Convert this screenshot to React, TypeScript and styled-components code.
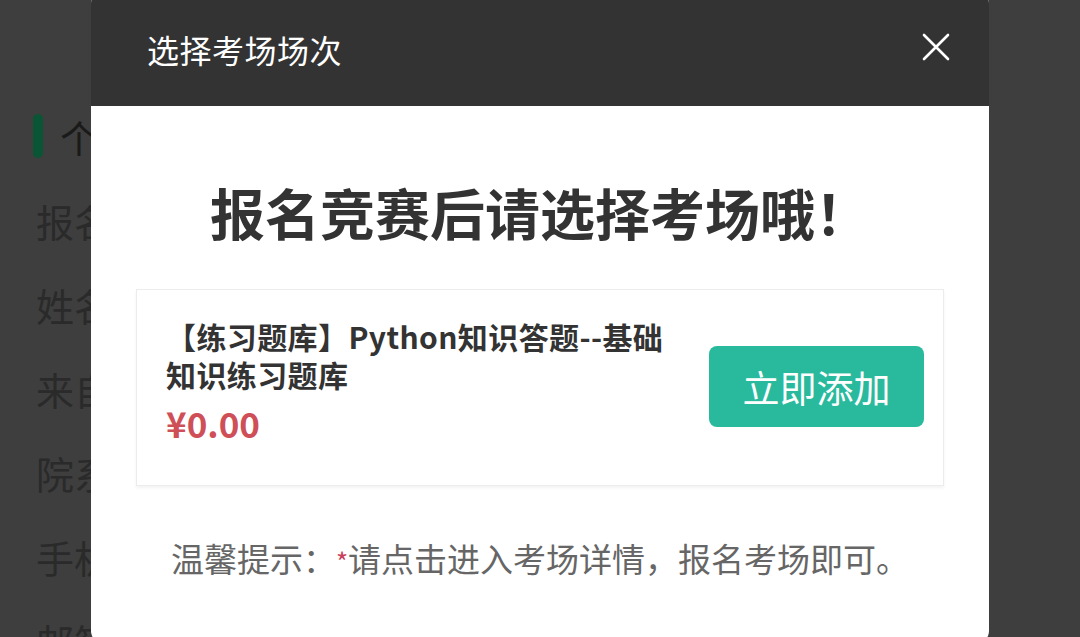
import React from "react";
import styled, { createGlobalStyle } from "styled-components";

const GlobalStyle = createGlobalStyle`
  html, body {
    margin: 0;
    padding: 0;
    height: 100%;
    overflow: hidden;
  }
  body {
    font-family: "Noto Sans CJK SC", "Noto Sans", sans-serif;
  }
  * {
    box-sizing: border-box;
  }
`;

const Page = styled.div`
  height: 637px;
  overflow: hidden;
  background: #7c7c7c;
  padding: 94px 0 0 33px;
`;

const SectionTitle = styled.div`
  display: flex;
  align-items: center;
  gap: 17px;
  height: 84px;
  font-size: 38px;
  color: #343434;
`;

const GreenBar = styled.span`
  width: 10px;
  height: 44px;
  border-radius: 5px;
  background: #14aa6c;
`;

const FieldRow = styled.div`
  display: flex;
  align-items: center;
  height: 84px;
  padding-left: 3px;
  font-size: 38px;
  color: #545454;
`;

const Overlay = styled.div`
  position: fixed;
  inset: 0;
  background: rgba(0, 0, 0, 0.5);
  display: flex;
  justify-content: center;
  align-items: flex-start;
`;

const Modal = styled.div`
  width: 898px;
  margin-top: -8px;
  border-radius: 12px;
  overflow: hidden;
  background: #fff;
`;

const Header = styled.div`
  height: 114px;
  padding: 0 39px 0 56px;
  background: #333333;
  display: flex;
  align-items: center;
  justify-content: space-between;
`;

const Title = styled.div`
  font-size: 32px;
  color: #fff;
  letter-spacing: 0.5px;
`;

const CloseButton = styled.button`
  width: 28px;
  height: 28px;
  padding: 0;
  border: none;
  background: transparent;
  display: flex;
  margin-top: -4px;
  cursor: pointer;
`;

const Body = styled.div`
  padding: 74px 45px 60px;
`;

const Heading = styled.h1`
  margin: 0;
  font-size: 55px;
  line-height: 62px;
  font-weight: 700;
  color: #333;
  text-align: center;
`;

const Card = styled.div`
  margin-top: 47px;
  min-height: 197px;
  display: flex;
  align-items: center;
  gap: 20px;
  padding: 0 19px 0 29px;
  border: 1px solid #ececec;
  box-shadow: 0 2px 3px rgba(0, 0, 0, 0.05);
  background: #fff;
`;

const CardInfo = styled.div`
  flex: 1;
  padding: 27px 0 40px;
`;

const CardTitle = styled.div`
  max-width: 510px;
  font-size: 30px;
  line-height: 38px;
  font-weight: 700;
  letter-spacing: 0.4px;
  color: #333;
`;

const Price = styled.div`
  margin-top: 8px;
  font-size: 35px;
  line-height: 44px;
  font-weight: 700;
  color: #cf4f58;
`;

const AddButton = styled.button`
  width: 215px;
  height: 81px;
  flex-shrink: 0;
  margin-top: -2px;
  border: none;
  border-radius: 8px;
  background: #29ba9d;
  color: #fff;
  font-family: inherit;
  font-size: 37px;
  cursor: pointer;
`;

const Tip = styled.p`
  margin: 50px 0 0;
  font-size: 33px;
  line-height: 44px;
  color: #666;
  text-align: center;
`;

const Star = styled.span`
  color: #c8405a;
  font-size: 26px;
`;

const fields = ["报名竞赛", "姓名", "来自学校", "院系", "手机号", "邮箱"];

function CloseIcon() {
  return (
    <svg width="28" height="28" viewBox="0 0 28 28" fill="none">
      <path
        d="M2 2 26 26M26 2 2 26"
        stroke="#fff"
        strokeWidth="2.6"
        strokeLinecap="round"
      />
    </svg>
  );
}

export default function App() {
  return (
    <>
      <GlobalStyle />
      <Page>
        <SectionTitle>
          <GreenBar />
          个人信息
        </SectionTitle>
        {fields.map((label) => (
          <FieldRow key={label}>{label}</FieldRow>
        ))}
      </Page>
      <Overlay>
        <Modal>
          <Header>
            <Title>选择考场场次</Title>
            <CloseButton aria-label="关闭">
              <CloseIcon />
            </CloseButton>
          </Header>
          <Body>
            <Heading>报名竞赛后请选择考场哦！</Heading>
            <Card>
              <CardInfo>
                <CardTitle>【练习题库】Python知识答题--基础知识练习题库</CardTitle>
                <Price>¥0.00</Price>
              </CardInfo>
              <AddButton>立即添加</AddButton>
            </Card>
            <Tip>
              温馨提示：<Star>*</Star>请点击进入考场详情，报名考场即可。
            </Tip>
          </Body>
        </Modal>
      </Overlay>
    </>
  );
}
